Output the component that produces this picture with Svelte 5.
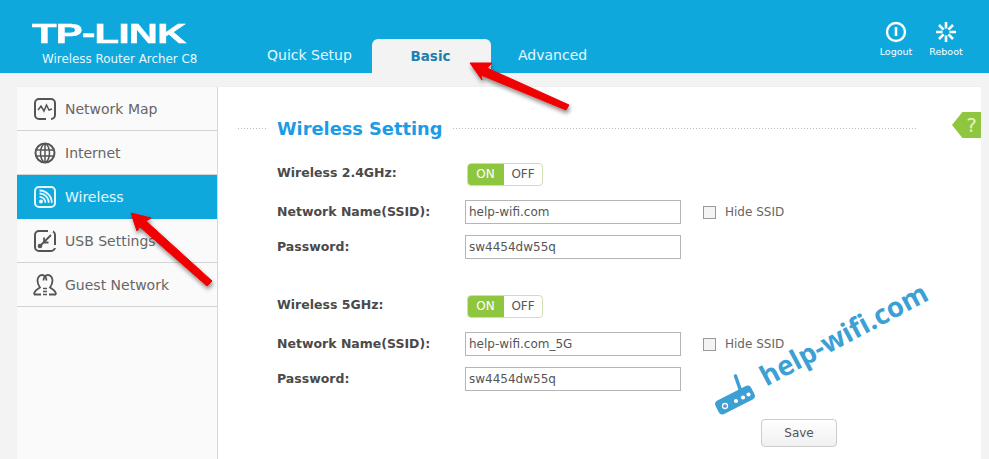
<script>
  const menu = [
    { name: 'Network Map', icon: 'map' },
    { name: 'Internet', icon: 'globe' },
    { name: 'Wireless', icon: 'wifi', active: true },
    { name: 'USB Settings', icon: 'usb' },
    { name: 'Guest Network', icon: 'guest' }
  ]

  const bands = [
    { label: 'Wireless 2.4GHz:', ssid: 'help-wifi.com', password: 'sw4454dw55q' },
    { label: 'Wireless 5GHz:', ssid: 'help-wifi.com_5G', password: 'sw4454dw55q' }
  ]
</script>

<div class="page">
  <header class="top">
    <div class="brand">
      <div class="logo">TP-LINK</div>
      <div class="model">Wireless Router Archer C8</div>
    </div>
    <nav class="tabs">
      <span class="tab quick">Quick Setup</span>
      <span class="tab current">Basic</span>
      <span class="tab">Advanced</span>
    </nav>
    <div class="actions">
      <div class="action">
        <svg width="24" height="24" viewBox="0 0 24 24" fill="none" stroke="#fff">
          <circle cx="12" cy="12" r="9" stroke-width="2.4" />
          <path d="M12 7v9" stroke-width="2.6" />
        </svg>
        <span>Logout</span>
      </div>
      <div class="action">
        <svg width="24" height="24" viewBox="0 0 24 24" fill="none" stroke="#fff" stroke-width="2.6">
          <path d="M12 2v6.5M12 15.5V22M2 12h6.5M15.5 12H22M5 5l4.600 4.600M14.400 14.400 19 19M19 5l-4.600 4.600M9.600 14.400 5 19" />
        </svg>
        <span>Reboot</span>
      </div>
    </div>
  </header>

  <div class="body">
    <aside class="side">
      {#each menu as item}
        <div class="item" class:active={item.active}>
          <svg class="icon" width="24" height="24" viewBox="0 0 24 24" fill="none" stroke="currentColor" stroke-width="2">
            {#if item.icon === 'map'}
              <rect x="2" y="2" width="20" height="20" rx="4" />
              <path d="M5 13l3-4 3 5 2.500-6 2.500 5 3-1" stroke-width="1.500" />
              <path d="M13 22h5" stroke="#fafafa" stroke-width="2.600" />
            {:else if item.icon === 'globe'}
              <circle cx="12" cy="12" r="9.500" stroke-width="2" />
              <ellipse cx="12" cy="12" rx="4.500" ry="9" stroke-width="1.500" />
              <path d="M12 3v18M3.500 9h17M3.500 15h17" stroke-width="1.500" />
            {:else if item.icon === 'wifi'}
              <rect x="2" y="2" width="20" height="20" rx="4" />
              <circle cx="8" cy="16.500" r="2" fill="currentColor" stroke="none" />
              <path d="M6.500 11.800a6 6 0 0 1 6 6M6.500 8.500a9.300 9.300 0 0 1 9.300 9.300M6.500 5.500a12.300 12.300 0 0 1 12.300 12.300" stroke-width="1.800" />
            {:else if item.icon === 'usb'}
              <rect x="2" y="2" width="20" height="20" rx="4" />
              <path d="M15 2h5M22 16v3" stroke="#fafafa" stroke-width="2.600" />
              <path d="M7 17l11-11M10.500 13.500h5M11 13V8.500" stroke-width="1.800" />
              <circle cx="7" cy="17" r="2.300" fill="currentColor" stroke="none" />
            {:else}
              <path d="M1 21.500c0-4 3.500-5 6-7C5.500 12.500 4.500 10 4.500 7.500 4.500 4.500 6.500 2 9 2s4.500 2.500 4.500 5.500M1 21.500h7" stroke-width="1.800" />
              <path d="M23 21.500c0-4-3.500-5-6-7 1.500-2 2.500-4.500 2.500-7C19.500 4.500 17.500 2 15 2s-4.500 2.500-4.500 5.500M23 21.500h-7" stroke-width="1.800" />
              <path d="M10 15.500h4M10 18.500h4M10 21.500h4" stroke-width="1.600" />
            {/if}
          </svg>
          <span>{item.name}</span>
        </div>
      {/each}
    </aside>

    <main class="main">
      <div class="help">?</div>
      <div class="title">
        <i class="dots lead"></i>
        <h1>Wireless Setting</h1>
        <i class="dots"></i>
      </div>

      {#each bands as band}
        <section class="band">
          <div class="row switch-row">
            <span class="label">{band.label}</span>
            <div class="switch"><b>ON</b><span>OFF</span></div>
          </div>
          <div class="row">
            <span class="label">Network Name(SSID):</span>
            <div class="field">{band.ssid}</div>
            <span class="box"></span>
            <span class="hide">Hide SSID</span>
          </div>
          <div class="row">
            <span class="label">Password:</span>
            <div class="field">{band.password}</div>
          </div>
        </section>
      {/each}

      <div class="foot"><div class="save">Save</div></div>
    </main>
  </div>

  <svg class="arrows" width="989" height="459" viewBox="0 0 989 459">
    <defs>
      <filter id="arrow-shadow" x="-20%" y="-20%" width="150%" height="160%">
        <feDropShadow dx="1" dy="3" stdDeviation="2" flood-color="#000" flood-opacity="0.45" />
      </filter>
    </defs>
    <g fill="#f00606" stroke="#f00606" stroke-width="1" stroke-linejoin="round" filter="url(#arrow-shadow)">
      <path d="M470 63 492 63 487 68 569 105 566 110 481 75 482 80Z" />
      <path d="M131 213 151 218 146 221 212 281 207 286 140 227 137 231Z" />
    </g>
  </svg>

  <div class="mark">
    <svg class="mark-icon" width="44" height="48" viewBox="0 0 44 48">
      <g transform="rotate(-27 21 28)">
        <rect x="1" y="20.500" width="40" height="15" rx="4" fill="#3d9fd3" />
      </g>
      <path d="M26 17 21.500 4" stroke="#3d9fd3" stroke-width="3.500" stroke-linecap="round" />
      <circle cx="11" cy="34" r="2.500" fill="none" stroke="#fff" stroke-width="1.300" />
      <circle cx="22" cy="29" r="2.100" fill="#fff" />
      <circle cx="29" cy="25.500" r="2.100" fill="#fff" />
      <circle cx="34.500" cy="22.500" r="2.100" fill="#fff" />
    </svg>
    <span class="mark-text">help-wifi.com</span>
  </div>
</div>

<style>
  :global(body) {
    margin: 0;
    background: #f3f3f3;
  }

  .page {
    position: relative;
    width: 989px;
    height: 459px;
    overflow: hidden;
    font-family: "DejaVu Sans", Verdana, sans-serif;
    color: #555;
  }

  .top {
    display: flex;
    height: 73px;
    background: #0fa8dd;
    color: #e6f8ff;
  }

  .brand {
    width: 267px;
    padding: 21px 0 0 32px;
    box-sizing: border-box;
  }

  .logo {
    font: bold 27px/27px "Liberation Sans", Arial, sans-serif;
    color: #fff;
    transform: scaleX(1.49);
    transform-origin: left;
    letter-spacing: -0.5px;
    -webkit-text-stroke: 0.5px #fff;
  }

  .model {
    margin: 4px 0 0 10px;
    font-size: 11.900px;
    line-height: 14px;
    white-space: nowrap;
  }

  .tabs {
    display: flex;
    align-items: flex-end;
    flex: 1;
    font-size: 14px;
  }

  .tab {
    padding-bottom: 9px;
    line-height: 18px;
  }

  .quick {
    width: 105px;
  }

  .current {
    box-sizing: border-box;
    width: 119px;
    height: 47px;
    margin-bottom: -13px;
    padding: 8px 2px 0 0;
    margin-right: 27px;
    border-radius: 6px 6px 0 0;
    background: #f3f3f3;
    color: #1f7fb0;
    font-weight: bold;
    text-align: center;
    font-size: 13.500px;
  }

  .actions {
    display: flex;
    gap: 16px;
    padding: 20px 26px 0 0;
  }

  .action {
    display: flex;
    flex-direction: column;
    align-items: center;
    width: 34px;
    font: 9.500px/12px "DejaVu Sans", sans-serif;
    color: #fff;
  }

  .action svg {
    margin-bottom: 2px;
  }

  .body {
    display: flex;
    margin: 13px 8px 0 17px;
    height: 373px;
    border-top: 1px solid #eee;
    position: relative;
  }

  .side {
    width: 200px;
    background: #fafafa;
    border-right: 1px solid #d8d8d8;
    flex: none;
  }

  .item {
    display: flex;
    align-items: center;
    box-sizing: border-box;
    height: 44px;
    padding-left: 16px;
    gap: 8px;
    border-bottom: 1px solid #d4d4d4;
    font-size: 14px;
    color: #666;
  }

  .icon {
    color: #555;
    flex: none;
  }

  .item.active {
    background: #0fa8dd;
    border-bottom-color: #0fa8dd;
    color: #e6f8ff;
  }

  .item.active .icon {
    color: #e6f8ff;
  }

  .main {
    position: relative;
    flex: 1;
    background: #fff;
    padding: 27px 0 0 19px;
  }

  .help {
    position: absolute;
    top: 25px;
    right: 0;
    width: 29px;
    height: 26px;
    background: #8fc63f;
    clip-path: polygon(36% 0, 100% 0, 100% 100%, 36% 100%, 0 50%);
    color: #e4f2c0;
    font: 20px/26px "DejaVu Sans", sans-serif;
    text-align: center;
    text-indent: 10px;
  }

  .title {
    display: flex;
    align-items: center;
    width: 679px;
    height: 28px;
    gap: 10px;
  }

  .title h1 {
    margin: 0;
    font-size: 17.800px;
    font-weight: bold;
    color: #1c9be6;
    white-space: nowrap;
  }

  .dots {
    flex: 1;
    height: 3px;
    background-image: radial-gradient(circle, #bbb 0.8px, transparent 1px);
    background-size: 3px 3px;
  }

  .dots.lead {
    flex: none;
    width: 30px;
  }

  .band {
    margin: 0 0 35px 40px;
  }

  .row {
    display: flex;
    align-items: center;
    height: 24px;
    margin-top: 11px;
  }

  .switch-row {
    margin-top: 20px;
    margin-bottom: 14px;
  }

  .label {
    width: 188px;
    flex: none;
    margin-bottom: 2px;
    font-size: 12.500px;
    font-weight: bold;
    color: #4a4a4a;
  }

  .switch-row .label {
    margin-bottom: 4px;
  }

  .switch {
    display: flex;
    box-sizing: border-box;
    width: 76px;
    height: 23px;
    margin-left: 2px;
    border: 1px solid #cfe0b5;
    border-radius: 4px;
    overflow: hidden;
    font-size: 12px;
    line-height: 21px;
    text-align: center;
  }

  .switch b {
    width: 37px;
    margin: -1px 0 -1px -1px;
    padding-top: 1px;
    background: #8fc63f;
    color: #fff;
    font-weight: normal;
  }

  .switch span {
    flex: 1;
  }

  .field {
    box-sizing: border-box;
    width: 216px;
    height: 24px;
    padding-left: 3px;
    border: 1px solid #b5b5b5;
    background: #fff;
    font-size: 12px;
    line-height: 22px;
    color: #555;
  }

  .box {
    box-sizing: border-box;
    width: 13px;
    height: 13px;
    margin-left: 22px;
    border: 1px solid #999;
    background: #f4f4f4;
  }

  .hide {
    margin-left: 9px;
    font-size: 12px;
    color: #666;
  }

  .foot {
    display: flex;
    width: 600px;
    justify-content: flex-end;
    margin-top: -7px;
  }

  .save {
    box-sizing: border-box;
    width: 76px;
    height: 28px;
    border: 1px solid #ccc;
    border-radius: 4px;
    background: linear-gradient(#fff, #f0f0f0);
    font-size: 12px;
    line-height: 26px;
    text-align: center;
    color: #555;
  }

  .arrows {
    position: absolute;
    inset: 0;
    pointer-events: none;
  }

  .mark {
    position: absolute;
    left: 714px;
    top: 286px;
    width: 230px;
    height: 134px;
  }

  .mark-icon {
    position: absolute;
    left: 0;
    top: 86px;
  }

  .mark-text {
    position: absolute;
    left: 55px;
    top: 74px;
    font: bold 27.500px/32px "Open Sans", "DejaVu Sans", sans-serif;
    color: #3d9fd3;
    transform: rotate(-28deg);
    transform-origin: left bottom;
    white-space: nowrap;
  }
</style>
